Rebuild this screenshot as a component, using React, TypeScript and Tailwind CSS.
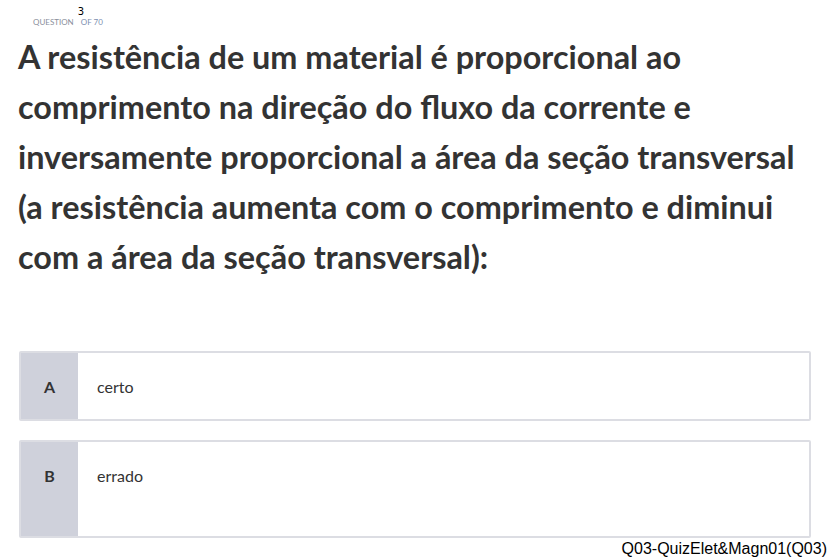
const OPTIONS = [
  { key: "A", text: "certo", h: "h-[70px]" },
  { key: "B", text: "errado", h: "h-[98px]" },
];

const LINES = [
  "A resistência de um material é proporcional ao",
  "comprimento na direção do fluxo da corrente e",
  "inversamente proporcional a área da seção transversal",
  "(a resistência aumenta com o comprimento e diminui",
  "com a área da seção transversal):",
];

export default function App() {
  return (
    <div className="relative h-[558px] w-[835px] overflow-hidden bg-white font-['Lato',sans-serif] text-[#333]">
      {/* Question counter */}
      <div className="flex items-end pl-[33px] pt-[8px] h-[26px] text-[8px] leading-none">
        <span className="text-[#8a8f9c]">QUESTION</span>
        <span className="relative ml-[7px] text-[#7c8fb0]">
          <span className="absolute -top-[11px] left-[-3px] font-['DejaVu_Sans',sans-serif] text-[10px] text-black">3</span>
          OF 70
        </span>
      </div>

      {/* Question text */}
      <h1 className="mt-[6px] pl-[18px] pr-[10px] text-[32.4px] font-bold leading-[50px] text-[#333] whitespace-nowrap">
        {LINES.map((l) => (
          <div key={l}>{l}</div>
        ))}
      </h1>

      {/* Options */}
      <div className="mt-[69px] flex flex-col gap-[19px] pl-[19px] pr-[24px]">
        {OPTIONS.map((o) => (
          <div
            key={o.key}
            className={`flex ${o.h} rounded-[2px] border-2 border-[#dcdde3] bg-white`}
          >
            <div className="flex w-[57px] shrink-0 items-start justify-center bg-[#cfd1db] pt-[22px] text-[16px] font-bold text-[#333]">
              {o.key}
            </div>
            <div className="pl-[19px] pt-[22px] text-[16px] text-[#333]">{o.text}</div>
          </div>
        ))}
      </div>

      <div className="absolute bottom-0 right-[8px] font-['Liberation_Sans',sans-serif] text-[16px] leading-[18px] text-black">
        Q03-QuizElet&amp;Magn01(Q03)
      </div>
    </div>
  );
}
